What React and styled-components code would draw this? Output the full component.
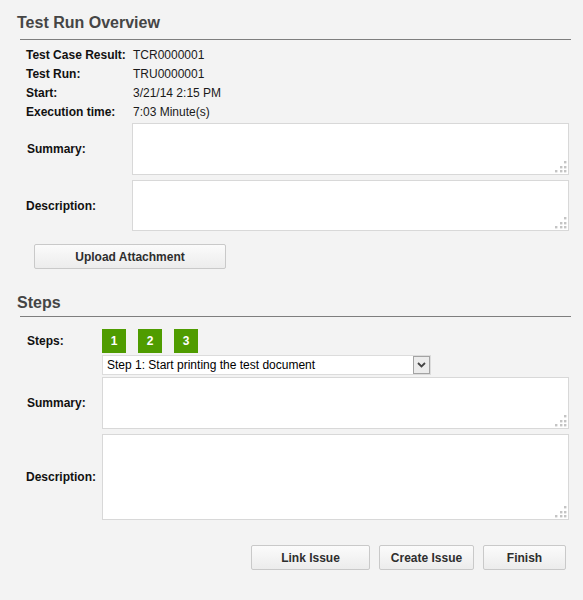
import React from "react";
import styled, { createGlobalStyle } from "styled-components";

const GlobalStyle = createGlobalStyle`
    body {
        margin: 0;
        background: #f3f3f3;
        font-family: "Liberation Sans", Arial, sans-serif;
        font-size: 12px;
        color: #111;
    }
`;

const Page = styled.div`
    width: 583px;
    padding-top: 13px;
`;

const Heading = styled.h2`
    margin: 0 0 0 17px;
    font-size: 16px;
    line-height: 20px;
    font-weight: bold;
    color: #454545;
`;

const Rule = styled.div`
    margin: ${(p) => p.$top || 5}px 0 0 20px;
    width: 551px;
    height: 1px;
    background: #7e7e7e;
`;

const InfoGrid = styled.div`
    display: grid;
    grid-template-columns: 107px auto;
    padding: 6px 0 0 26px;
    line-height: 19px;

    .label {
        font-weight: bold;
    }
    .value {
        color: #1a1a1a;
    }
`;

const FieldRow = styled.div`
    display: flex;
    align-items: ${(p) => (p.$top ? "flex-start" : "center")};
    margin-top: ${(p) => p.$gap}px;
    padding-left: ${(p) => p.$indent}px;
`;

const FieldLabel = styled.div`
    width: ${(p) => p.$width}px;
    font-weight: bold;
    flex-shrink: 0;
    line-height: ${(p) => p.$lineHeight || "normal"};
`;

const AreaWrap = styled.div`
    position: relative;
    width: ${(p) => p.$width}px;
    height: ${(p) => p.$height}px;
`;

const Area = styled.textarea`
    box-sizing: border-box;
    width: 100%;
    height: 100%;
    margin: 0;
    border: 1px solid #d8d8d8;
    background: #fff;
    resize: none;
    outline: none;
    font-family: inherit;
    font-size: 12px;
    display: block;
`;

const Grip = styled.svg`
    position: absolute;
    right: 2px;
    bottom: 2px;
    pointer-events: none;
`;

const ResizeGrip = () => (
    <Grip width="12" height="12" viewBox="0 0 12 12">
        {[
            [9, 0], [5, 5], [9, 5], [0, 9], [5, 9], [9, 9]
        ].map(([x, y]) => (
            <rect key={`${x}-${y}`} x={x} y={y} width="2.4" height="2.4" fill="#c4c4c4" />
        ))}
    </Grip>
);

const TextField = ({ width, height }) => (
    <AreaWrap $width={width} $height={height}>
        <Area />
        <ResizeGrip />
    </AreaWrap>
);

const Button = styled.button`
    box-sizing: border-box;
    width: ${(p) => p.$width}px;
    height: 25px;
    margin: 0;
    padding: 0;
    border: 1px solid #c9c9c9;
    border-radius: 2px;
    background: linear-gradient(#fbfbfb, #ececec);
    font-family: "Liberation Sans", Arial, sans-serif;
    font-size: 12px;
    font-weight: bold;
    color: #2e2e2e;
`;

const UploadRow = styled.div`
    margin: 13px 0 0 34px;
`;

const StepsHeading = styled(Heading)`
    margin-top: 24px;
`;

const StepButtons = styled.div`
    display: flex;
    gap: 12px;
`;

const StepButton = styled.div`
    width: 24px;
    height: 24px;
    background: #4f9c00;
    color: #fff;
    font-weight: bold;
    font-size: 12px;
    display: flex;
    align-items: center;
    justify-content: center;
`;

const StepColumn = styled.div`
    display: flex;
    flex-direction: column;
`;

const SelectBox = styled.div`
    box-sizing: border-box;
    display: flex;
    align-items: stretch;
    width: 329px;
    height: 20px;
    margin-top: 2px;
    border: 1px solid #dcdcdc;
    background: #fff;

    select {
        flex: 1;
        appearance: none;
        border: none;
        background: transparent;
        outline: none;
        font-family: "Liberation Sans", Arial, sans-serif;
        font-size: 12px;
        color: #000;
        padding: 0 0 0 4px;
    }
`;

const ArrowBox = styled.div`
    box-sizing: border-box;
    width: 17px;
    border: 1px solid #a3a3a3;
    background: #ececec;
    display: flex;
    align-items: center;
    justify-content: center;
`;

const Actions = styled.div`
    display: flex;
    justify-content: flex-end;
    gap: 9px;
    margin: 25px 17px 0 0;
`;

const info = [
    ["Test Case Result:", "TCR0000001"],
    ["Test Run:", "TRU0000001"],
    ["Start:", "3/21/14 2:15 PM"],
    ["Execution time:", "7:03 Minute(s)"]
];

const App = () => {
    return (
        <Page>
            <GlobalStyle />
            <Heading>Test Run Overview</Heading>
            <Rule $top={6} />
            <InfoGrid>
                {info.map(([label, value]) => (
                    <React.Fragment key={label}>
                        <div className="label">{label}</div>
                        <div className="value">{value}</div>
                    </React.Fragment>
                ))}
            </InfoGrid>
            <FieldRow $gap={1} $indent={27}>
                <FieldLabel $width={105}>Summary:</FieldLabel>
                <TextField width={437} height={52} />
            </FieldRow>
            <FieldRow $gap={5} $indent={26}>
                <FieldLabel $width={106}>Description:</FieldLabel>
                <TextField width={437} height={51} />
            </FieldRow>
            <UploadRow>
                <Button $width={192}>Upload Attachment</Button>
            </UploadRow>

            <StepsHeading>Steps</StepsHeading>
            <Rule $top={3} />
            <FieldRow $gap={12} $indent={27} $top>
                <FieldLabel $width={75} $lineHeight="24px">Steps:</FieldLabel>
                <StepColumn>
                    <StepButtons>
                        <StepButton>1</StepButton>
                        <StepButton>2</StepButton>
                        <StepButton>3</StepButton>
                    </StepButtons>
                    <SelectBox>
                        <select defaultValue="1">
                            <option value="1">Step 1: Start printing the test document</option>
                            <option value="2">Step 2</option>
                            <option value="3">Step 3</option>
                        </select>
                        <ArrowBox>
                            <svg width="9" height="6" viewBox="0 0 9 6">
                                <path d="M1 1 L4.5 4.5 L8 1" fill="none" stroke="#444" strokeWidth="1.8" />
                            </svg>
                        </ArrowBox>
                    </SelectBox>
                </StepColumn>
            </FieldRow>
            <FieldRow $gap={2} $indent={27}>
                <FieldLabel $width={75}>Summary:</FieldLabel>
                <TextField width={467} height={52} />
            </FieldRow>
            <FieldRow $gap={5} $indent={26}>
                <FieldLabel $width={76}>Description:</FieldLabel>
                <TextField width={467} height={86} />
            </FieldRow>
            <Actions>
                <Button $width={119}>Link Issue</Button>
                <Button $width={95}>Create Issue</Button>
                <Button $width={83}>Finish</Button>
            </Actions>
        </Page>
    );
};

export default App;
